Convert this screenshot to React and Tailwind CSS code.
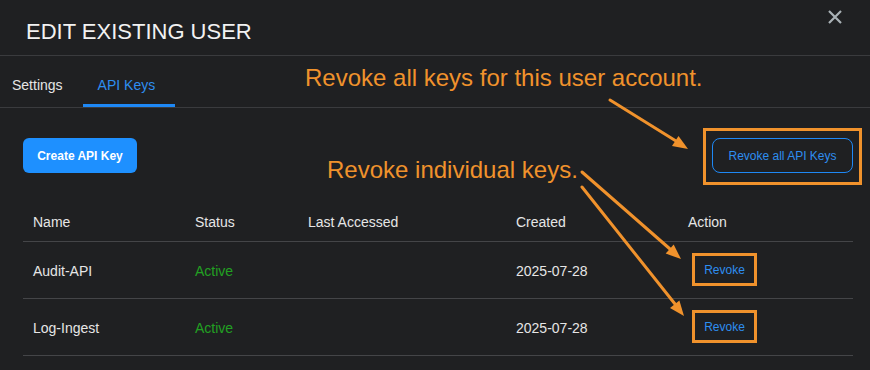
import React from 'react';

const keys = [
  { name: 'Audit-API', status: 'Active', lastAccessed: '', created: '2025-07-28' },
  { name: 'Log-Ingest', status: 'Active', lastAccessed: '', created: '2025-07-28' },
];

const Arrows = () => (
  <svg className="absolute inset-0 pointer-events-none" width="870" height="370" viewBox="0 0 870 370">
    <g stroke="#f0922c" strokeWidth="3" strokeLinecap="round" fill="#f0922c">
      <line x1="610" y1="100" x2="676" y2="141" />
      <polygon points="688,149 672,146 678.5,135.9" stroke="none" />
      <line x1="582" y1="172" x2="670" y2="249" />
      <polygon points="681,259 665.7,253.6 673.7,244.6" stroke="none" />
      <line x1="582" y1="187" x2="675" y2="304" />
      <polygon points="684,316 670,307.9 679.4,300.5" stroke="none" />
    </g>
  </svg>
);

const App = () => {
  return (
    <div
      className="relative w-[870px] h-[370px] overflow-hidden bg-[#1f2022] text-[#e6e6e6]"
      style={{ fontFamily: '"Liberation Sans", Arial, sans-serif' }}
    >
      {/* header */}
      <div className="h-[56px] border-b border-[#3a3b3e] flex items-center pl-[26px] relative">
        <h1 className="text-[22px] leading-none text-[#f2f2f2] mt-[8px]">EDIT EXISTING USER</h1>
        <button className="absolute right-[27px] top-[9px] text-[#a9b1b6]">
          <svg width="16" height="16" viewBox="0 0 16 16">
            <path d="M2 2 L14 14 M14 2 L2 14" stroke="currentColor" strokeWidth="2.2" />
          </svg>
        </button>
      </div>

      {/* tabs */}
      <div className="h-[52px] border-b border-[#3a3b3e] flex items-stretch text-[14px]">
        <div className="flex items-center pt-[8px] ml-[12px] mr-[21px] text-[#e6e6e6]">Settings</div>
        <div className="relative flex items-center pt-[8px] w-[92px] pl-[14px] text-[#2e8ef0]">
          API Keys
          <div className="absolute left-[-1px] right-[1px] bottom-[0px] h-[3px] bg-[#1e88f5]" />
        </div>
      </div>

      {/* content */}
      <div className="pl-[23px] pr-[17px]">
        <div className="flex items-center justify-between mt-[30px]">
          <button className="h-[35px] w-[114px] rounded-[6px] bg-[#1e90ff] text-white text-[12px] font-bold">
            Create API Key
          </button>
          <button className="h-[35px] w-[141px] rounded-[8px] border border-[#1e88f5] text-[#2e8ef0] text-[12px]">
            Revoke all API Keys
          </button>
        </div>

        <table className="w-full mt-[27px] text-[14px] border-collapse">
          <thead>
            <tr className="h-[41px] border-b border-[#444548] text-left">
              <th className="font-normal pl-[10px] pt-[4px] w-[172px]">Name</th>
              <th className="font-normal pt-[4px] w-[113px]">Status</th>
              <th className="font-normal pt-[4px] w-[208px]">Last Accessed</th>
              <th className="font-normal pt-[4px] w-[172px]">Created</th>
              <th className="font-normal pt-[4px]">Action</th>
            </tr>
          </thead>
          <tbody>
            {keys.map((k) => (
              <tr key={k.name} className="h-[57px] border-b border-[#444548]">
                <td className="pl-[10px] pt-[3px]">{k.name}</td>
                <td className="pt-[3px] text-[#22a022]">{k.status}</td>
                <td className="pt-[3px]">{k.lastAccessed}</td>
                <td className="pt-[3px]">{k.created}</td>
                <td>
                  <button className="ml-[4px] w-[65px] h-[33px] border-[3px] border-[#f0922c] text-[12px] text-[#2e8ef0]">
                    Revoke
                  </button>
                </td>
              </tr>
            ))}
          </tbody>
        </table>
      </div>

      {/* annotations */}
      <div className="absolute left-[703px] top-[128px] w-[159px] h-[57px] border-[3px] border-[#f0922c]" />
      <div className="absolute left-[305px] top-[65px] text-[24px] leading-[26px] text-[#f0922c]">
        Revoke all keys for this user account.
      </div>
      <div className="absolute left-[327px] top-[157px] text-[24px] leading-[26px] text-[#f0922c]">
        Revoke individual keys.
      </div>
      <Arrows />
    </div>
  );
};

export default App;
